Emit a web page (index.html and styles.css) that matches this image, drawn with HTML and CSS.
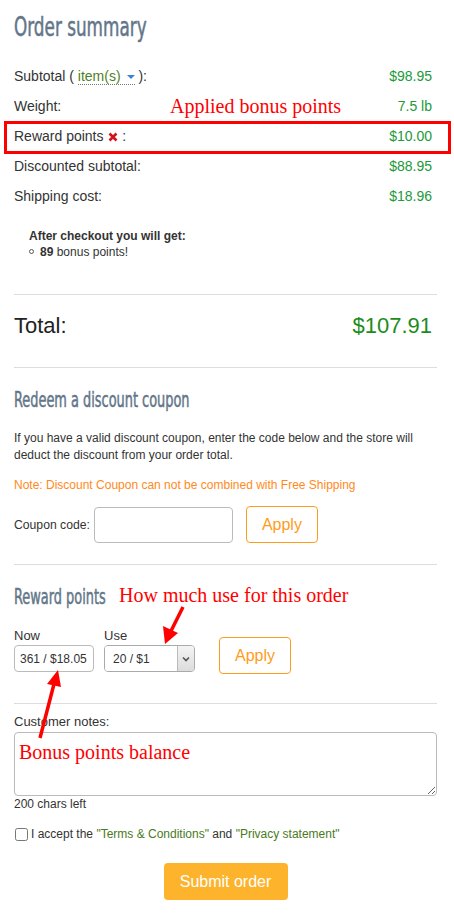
FILE: index.html
```html
<!DOCTYPE html>
<html>
<head>
    <link rel="stylesheet" href="styles.css">
</head>
<body>
    <div class="page">
        <h1 class="title">Order summary</h1>

        <div class="summary">
            <div class="row">
                <span>Subtotal ( <a class="items-link">item(s) <span class="caret"></span></a> ):</span>
                <span class="value">$98.95</span>
            </div>
            <div class="row">
                <span>Weight:</span>
                <span class="value">7.5 lb</span>
            </div>
            <div class="row">
                <span>Reward points
                    <svg class="remove" width="10" height="10" viewBox="0 0 10 10"><path d="M1.5 1.5 L8.5 8.5 M8.5 1.5 L1.5 8.5" stroke="#d0141c" stroke-width="2.6"/></svg>
                    :</span>
                <span class="value">$10.00</span>
            </div>
            <div class="row">
                <span>Discounted subtotal:</span>
                <span class="value">$88.95</span>
            </div>
            <div class="row">
                <span>Shipping cost:</span>
                <span class="value">$18.96</span>
            </div>
        </div>

        <div class="bonus">
            <div class="bonus-title">After checkout you will get:</div>
            <div class="bonus-item"><span class="dot"></span><b>89</b> bonus points!</div>
        </div>

        <hr>

        <div class="total">
            <span>Total:</span>
            <span class="total-value">$107.91</span>
        </div>

        <hr>

        <h2 class="section-title">Redeem a discount coupon</h2>
        <p class="info">If you have a valid discount coupon, enter the code below and the store will deduct the discount from your order total.</p>
        <p class="note">Note: Discount Coupon can not be combined with Free Shipping</p>
        <div class="coupon">
            <label>Coupon code:</label>
            <input type="text" class="coupon-input">
            <button class="apply">Apply</button>
        </div>

        <hr class="hr-reward">

        <h2 class="section-title">Reward points</h2>
        <div class="points">
            <div class="field">
                <label>Now</label>
                <input type="text" class="now-input" value="361 / $18.05">
            </div>
            <div class="field">
                <label>Use</label>
                <div class="select-box">
                    <select><option>20 / $1</option></select>
                    <span class="select-btn">
                        <svg width="8" height="6" viewBox="0 0 8 6"><path d="M1 1.5 L4 4.5 L7 1.5" fill="none" stroke="#555" stroke-width="1.6"/></svg>
                    </span>
                </div>
            </div>
            <button class="apply apply-points">Apply</button>
        </div>

        <hr class="hr-notes">

        <label class="notes-label">Customer notes:</label>
        <textarea class="notes"></textarea>
        <div class="chars">200 chars left</div>

        <div class="accept">
            <input type="checkbox" class="check">
            <span>I accept the <a>"Terms &amp; Conditions"</a> and <a>"Privacy statement"</a></span>
        </div>

        <div class="submit-wrap">
            <button class="submit">Submit order</button>
        </div>

        <!-- annotations drawn over the screenshot -->
        <div class="mark-box"></div>
        <div class="note-red note-applied">Applied bonus points</div>
        <div class="note-red note-use">How much use for this order</div>
        <div class="note-red note-balance">Bonus points balance</div>
        <svg class="arrows" width="454" height="914" viewBox="0 0 454 914">
            <line x1="183" y1="607" x2="171" y2="631" stroke="#f00" stroke-width="3.5"/>
            <polygon points="165,644 163,626 178,633" fill="#f00"/>
            <line x1="40" y1="738" x2="54" y2="684" stroke="#f00" stroke-width="3.5"/>
            <polygon points="58,670 61,687 47,684" fill="#f00"/>
        </svg>
    </div>
</body>
</html>
```

FILE: styles.css
```css
body {
    margin: 0;
    font-family: "Liberation Sans", Arial, sans-serif;
    font-size: 14px;
    color: #333;
    background: #fff;
}
.page {
    position: relative;
    padding: 12px 17px 16px 14px;
}
/* no condensed headline font here, so squeeze DejaVu Condensed */
.title, .section-title {
    margin: 0;
    font-family: "DejaVu Sans Condensed", "DejaVu Sans", sans-serif;
    font-weight: normal;
    color: #637689;
    -webkit-text-stroke: 0.5px #637689;
    transform: scaleX(0.72);
    transform-origin: left center;
    white-space: nowrap;
}
.title {
    font-size: 26px;
    line-height: 30px;
}
.section-title {
    font-size: 20.5px;
    line-height: 24px;
    margin-top: 20px;
    transform: scaleX(0.7);
}
.summary {
    margin-top: 19px;
}
.row {
    display: flex;
    justify-content: space-between;
    align-items: center;
    height: 30px;
    padding-right: 5px;
}
.value {
    color: #22993a;
}
.items-link {
    color: #4f7f25;
    border-bottom: 1px dotted #777;
}
.caret {
    display: inline-block;
    width: 0;
    height: 0;
    border-left: 4px solid transparent;
    border-right: 4px solid transparent;
    border-top: 4px solid #3b82d0;
    vertical-align: middle;
    margin-left: 2px;
}
.remove {
    vertical-align: -1px;
    margin-left: 1px;
}
.bonus {
    margin-top: 17px;
    padding-left: 15px;
    font-size: 12px;
    line-height: 16px;
}
.bonus-title {
    font-weight: bold;
}
.dot {
    display: inline-block;
    width: 3px;
    height: 3px;
    border: 1px solid #555;
    border-radius: 50%;
    margin-right: 6px;
    vertical-align: 2px;
}
hr {
    border: 0;
    border-top: 1px solid #ddd;
    margin: 0;
}
.bonus + hr {
    margin-top: 34px;
}
.total {
    display: flex;
    justify-content: space-between;
    align-items: center;
    height: 62px;
    margin-bottom: 10px;
    padding-right: 5px;
    font-size: 22px;
    color: #222;
}
.total-value {
    color: #1c8c1c;
}
.info, .note {
    font-size: 12px;
    line-height: 17px;
    margin: 18px 0 0;
}
.note {
    color: #ff8a1c;
    margin-top: 13px;
}
.coupon {
    display: flex;
    align-items: center;
    margin-top: 12px;
    font-size: 12.2px;
}
.coupon-input {
    width: 139px;
    height: 36px;
    box-sizing: border-box;
    margin: 0 0 0 4px;
    border: 1px solid #bbb;
    border-radius: 4px;
}
.apply {
    width: 72px;
    height: 37px;
    margin-left: 13px;
    border: 1px solid #ff9c1a;
    border-radius: 4px;
    background: #fff;
    color: #ff9c1a;
    font-family: "Liberation Sans", Arial, sans-serif;
    font-size: 16px;
}
.hr-reward {
    margin-top: 21px;
}
.points {
    display: flex;
    align-items: flex-end;
    margin-top: 19px;
    font-size: 13px;
}
.field label {
    display: block;
    line-height: 16px;
    margin-bottom: 1px;
}
.now-input {
    width: 80px;
    height: 27px;
    box-sizing: border-box;
    margin: 0;
    padding: 0 5px;
    border: 1px solid #bbb;
    border-radius: 4px;
    font-family: "Liberation Sans", Arial, sans-serif;
    font-size: 12px;
    color: #333;
}
.field + .field {
    margin-left: 10px;
}
.select-box {
    display: flex;
    width: 91px;
    height: 27px;
    box-sizing: border-box;
    border: 1px solid #aaa;
    border-radius: 4px;
    overflow: hidden;
}
.select-box select {
    flex: 1;
    min-width: 0;
    border: 0;
    outline: none;
    -webkit-appearance: none;
    appearance: none;
    background: #fff;
    padding-left: 8px;
    font-family: "Liberation Sans", Arial, sans-serif;
    font-size: 12px;
    color: #333;
}
.select-btn {
    display: flex;
    align-items: center;
    justify-content: center;
    width: 16px;
    border-left: 1px solid #bbb;
    background: linear-gradient(#f4f4f4, #dcdcdc);
}
.apply-points {
    margin: 0 0 -2px 24px;
}
.hr-notes {
    margin-top: 31px;
}
.notes-label {
    display: block;
    margin-top: 10px;
    line-height: 16px;
    font-size: 13px;
}
.notes {
    display: block;
    width: 100%;
    height: 64px;
    box-sizing: border-box;
    margin: 2px 0 0;
    border: 1px solid #bbb;
    border-radius: 4px;
}
.chars {
    font-size: 12px;
    line-height: 16px;
}
.accept {
    display: flex;
    align-items: center;
    margin-top: 14px;
    font-size: 12px;
    line-height: 16px;
}
.accept a {
    color: #4a7a22;
}
.check {
    width: 13px;
    height: 13px;
    margin: 0 3px 0 1px;
}
.submit-wrap {
    display: flex;
    justify-content: center;
    margin-top: 21px;
}
.submit {
    width: 124px;
    height: 37px;
    border: 0;
    border-radius: 4px;
    background: #fdb42c;
    color: #fff;
    font-family: "Liberation Sans", Arial, sans-serif;
    font-size: 16px;
}
/* red annotations */
.mark-box {
    position: absolute;
    left: 4px;
    top: 121px;
    width: 441px;
    height: 27px;
    border: 3px solid #f00;
}
.note-red {
    position: absolute;
    font-family: "Liberation Serif", "Times New Roman", serif;
    font-size: 20px;
    color: #f00;
    line-height: 22px;
}
.note-applied {
    left: 170px;
    top: 95px;
}
.note-use {
    left: 119px;
    top: 584px;
}
.note-balance {
    left: 19px;
    top: 741px;
}
.arrows {
    position: absolute;
    left: 0;
    top: 0;
    pointer-events: none;
}
```
